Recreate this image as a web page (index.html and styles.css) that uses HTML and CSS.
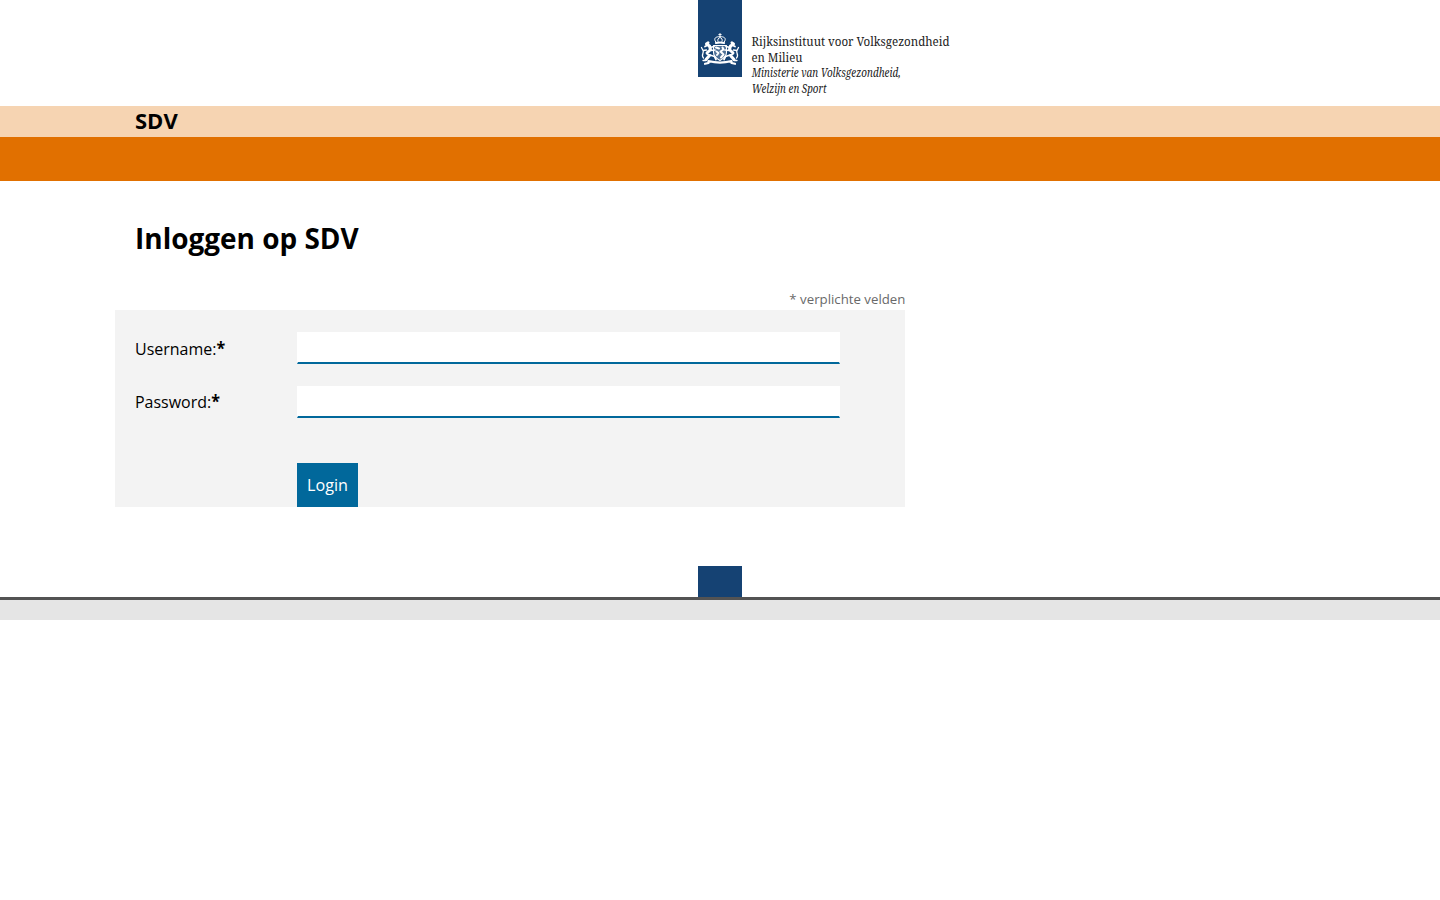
FILE: index.html
```html
<!DOCTYPE html>
<html lang="nl">
<head>
<meta charset="utf-8">
<title>Inloggen op SDV</title>
<link rel="stylesheet" href="styles.css">
</head>
<body>
<header class="logo">
  <svg class="ribbon" width="44" height="77" viewBox="0 0 44 77" aria-hidden="true">
    <rect width="44" height="77" fill="#154273"/>
    <g fill="none" stroke="#fff" stroke-linecap="round" stroke-linejoin="round">
      <path stroke-width="1" d="M22 33.500v3M20.800 34.600h2.400M17.800 42c-3-4 .5-5.500 4.200-5.300c3.700-.2 7.200 1.300 4.200 5.300M20 41.500c-1-2 .5-3.500 2-4c1.500.5 3 2 2 4"/>
      <path stroke-width="1.800" d="M17.800 43q4.200-1 8.400 0"/>
      <path stroke-width="1.100" fill="#fff" fill-opacity=".25" d="M15.500 45.500h13v7c0 4-3 6-6.500 8c-3.500-2-6.500-4-6.500-8z"/>
      <path stroke-width="2" d="M18 47.500l3 1M24.500 47.500l1 2-3 2 3 3-2.500 3M18.500 51.500l2 1.500-1.500 2"/>
      <path stroke-width="3" d="M10 42.800l-1.500 1.200 3 2 1 3.500-3.500 3.500 2.500 2.500-3.500 4M34 42.800l1.500 1.200-3 2-1 3.500 3.500 3.500-2.500 2.500 3.500 4"/>
      <path stroke-width="1.700" d="M12 47.500l4-1M13 50.500l4-.5M12 55l4.500 1.500 1.500 3M32 47.500l-4-1M31 50.500l-4-.5M32 55l-4.500 1.500-1.500 3M9 45.500l-2 1M35 45.500l2 1"/>
      <path stroke-width="1.300" d="M8.500 50l-3 .5M8 60.500h-3M5.500 58c-3-3 1-5-.5-7.500l-1.500-3M35.500 50l3 .5M36 60.500h3M38.500 58c3-3-1-5 .5-7.500l1.500-3"/>
      <path stroke-width="2.200" d="M7 63.800l3.500-.8v-2c7.500 2 15.500 2 23 0v2l3.500.8"/>
    </g>
  </svg>
  <svg class="wordmark" width="210" height="70" viewBox="0 0 210 70">
    <text x="-.5" y="16" textLength="198" lengthAdjust="spacingAndGlyphs">Rijksinstituut voor Volksgezondheid</text>
    <text x="-.5" y="31.700" textLength="51" lengthAdjust="spacingAndGlyphs">en Milieu</text>
    <text class="ministry" x="-.3" y="47.300" textLength="149" lengthAdjust="spacingAndGlyphs">Ministerie van Volksgezondheid,</text>
    <text class="ministry" x="-.3" y="62.800" textLength="75" lengthAdjust="spacingAndGlyphs">Welzijn en Sport</text>
  </svg>
</header>
<div class="titlebar"><span class="site">SDV</span></div>
<div class="navbar"></div>
<main>
  <h1><span>Inloggen op SDV</span></h1>
  <p class="required"><span>* verplichte velden</span></p>
  <form>
    <div class="row"><label for="u"><span>Username:<b>*</b></span></label><input id="u" type="text"></div>
    <div class="row second"><label for="p"><span>Password:<b>*</b></span></label><input id="p" type="password"></div>
    <button type="button"><span>Login</span></button>
  </form>
</main>
<footer><div class="block"></div><div class="strip"></div></footer>
</body>
</html>
```
FILE: styles.css
```css
* { box-sizing: border-box; }
body { margin: 0; background: #fff; color: #000; font: 17px/24px "Open Sans", "Noto Sans", sans-serif; }
.logo { height: 106px; padding-left: 698px; display: flex; }
.ribbon { flex: none; }
.wordmark { margin: 30px 0 0 10px; flex: none; font: 12.4px "Noto Serif", "Droid Serif", "Liberation Serif", serif; fill: #222; overflow: visible; }
.ministry { font-style: italic; }
.titlebar { height: 31px; background: #f6d4b2; padding-left: 135px; }
.site { font-size: 22px; line-height: 28px; font-weight: 700; display: inline-block; }
.navbar { height: 44px; background: #e17000; }
main { width: 790px; margin-left: 115px; height: 385px; }
h1 { margin: 0; padding: 37px 0 0 20px; height: 110px; font-size: 29px; line-height: 40px; }
h1 span, label span, .required span, button span { display: inline-block; transform-origin: left; }
h1 span { transform: scaleX(.964); }
label span { transform: scaleX(.94); }
button span { transform: scaleX(.95); }
.required { margin: 0; height: 19px; line-height: 17px; font-size: 13.5px; text-align: right; color: #696969; }
.required span { transform-origin: right; transform: scaleX(.98); }
form { height: 197px; background: #f3f3f3; padding: 22px 0 0 20px; }
.row { display: flex; height: 54px; }
label { width: 162px; padding-top: 5px; }
.second label { padding-top: 4px; }
input { width: 543px; height: 32px; border: 1px solid #fff; border-bottom: 2px solid #01689b; border-radius: 0; background: #fff; padding: 0 8px; outline: 0; }
button { display: block; margin: 23px 0 0 162px; width: 61px; height: 44px; padding: 0 0 0 10px; border: 0; background: #01689b; color: #fff; font: inherit; text-align: left; }
footer .block { width: 44px; height: 31px; background: #154273; margin-left: 698px; }
footer .strip { height: 23px; border-top: 3px solid #535353; background: #e5e5e5; }
```
